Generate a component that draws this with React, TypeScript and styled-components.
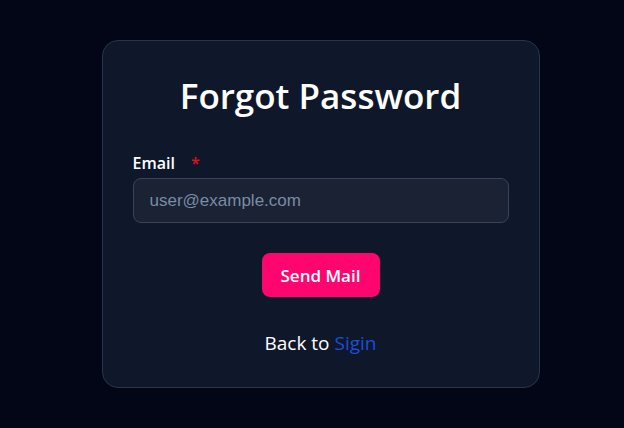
import React from "react";
import styled, { createGlobalStyle } from "styled-components";

const Global = createGlobalStyle`
  html, body { margin: 0; padding: 0; background: #020617; }
  body { font-family: "Open Sans", "Noto Sans", sans-serif; }
  * { box-sizing: border-box; }
`;

const Page = styled.div`
  min-height: 428px;
  display: flex;
  align-items: center;
  justify-content: center;
  padding-left: 17px;
`;

const Card = styled.form`
  width: 438px;
  height: 348px;
  background: #0f172a;
  border: 1px solid #273449;
  border-radius: 16px;
  padding: 31px 30px 0 30px;
  display: flex;
  flex-direction: column;
`;

const Title = styled.h1`
  margin: 0 0 32px 0;
  text-align: center;
  color: #ffffff;
  font-size: 35px;
  font-weight: 600;
  line-height: 48px;
`;

const Label = styled.label`
  display: flex;
  gap: 16px;
  color: #ffffff;
  font-size: 16px;
  font-weight: 600;
  line-height: 22px;
  margin-bottom: 4px;
`;

const Required = styled.span`
  color: #e0101e;
`;

const Input = styled.input`
  width: 100%;
  height: 45px;
  background: #1a2234;
  border: 1px solid #39445a;
  border-radius: 8px;
  padding: 0 16px;
  color: #ffffff;
  font-family: "Liberation Sans", Arial, sans-serif;
  font-size: 17px;
  outline: none;
  &::placeholder { color: #7a8ba6; }
`;

const Actions = styled.div`
  display: flex;
  justify-content: center;
  margin-top: 30px;
`;

const SendButton = styled.button`
  width: 118px;
  height: 44px;
  border: none;
  border-radius: 8px;
  background: #ff0570;
  color: #ffffff;
  font-family: "Open Sans", "Noto Sans", sans-serif;
  font-size: 17px;
  font-weight: 600;
  cursor: pointer;
`;

const Footer = styled.p`
  margin: 34px 0 0 0;
  text-align: center;
  color: #ffffff;
  font-size: 19px;
  line-height: 24px;
`;

const Link = styled.a`
  color: #1d4ed8;
  text-decoration: none;
`;

export default function App() {
  return (
    <>
      <Global />
      <Page>
        <Card onSubmit={(e) => e.preventDefault()}>
          <Title>Forgot Password</Title>
          <Label htmlFor="email">
            Email <Required>*</Required>
          </Label>
          <Input id="email" type="email" placeholder="user@example.com" />
          <Actions>
            <SendButton type="submit">Send Mail</SendButton>
          </Actions>
          <Footer>
            Back to <Link href="#">Sigin</Link>
          </Footer>
        </Card>
      </Page>
    </>
  );
}
